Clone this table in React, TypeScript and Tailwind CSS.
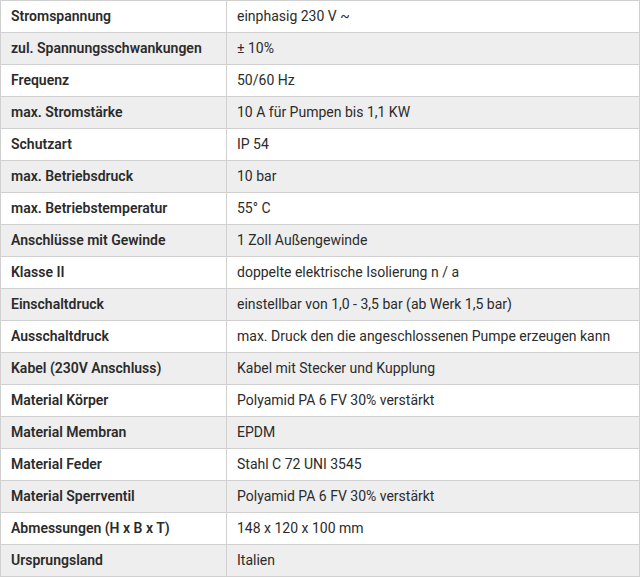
const rows: [string, string][] = [
  ['Stromspannung', 'einphasig 230 V ~'],
  ['zul. Spannungsschwankungen', '± 10%'],
  ['Frequenz', '50/60 Hz'],
  ['max. Stromstärke', '10 A für Pumpen bis 1,1 KW'],
  ['Schutzart', 'IP 54'],
  ['max. Betriebsdruck', '10 bar'],
  ['max. Betriebstemperatur', '55° C'],
  ['Anschlüsse mit Gewinde', '1 Zoll Außengewinde'],
  ['Klasse II', 'doppelte elektrische Isolierung n / a'],
  ['Einschaltdruck', 'einstellbar von 1,0 - 3,5 bar (ab Werk 1,5 bar)'],
  ['Ausschaltdruck', 'max. Druck den die angeschlossenen Pumpe erzeugen kann'],
  ['Kabel (230V Anschluss)', 'Kabel mit Stecker und Kupplung'],
  ['Material Körper', 'Polyamid PA 6 FV 30% verstärkt'],
  ['Material Membran', 'EPDM'],
  ['Material Feder', 'Stahl C 72 UNI 3545'],
  ['Material Sperrventil', 'Polyamid PA 6 FV 30% verstärkt'],
  ['Abmessungen (H x B x T)', '148 x 120 x 100 mm'],
  ['Ursprungsland', 'Italien'],
];

export default function App() {
  return (
    <div className="w-[640px] bg-white font-['Roboto',sans-serif] text-[14px] text-[#2b2b2b]">
      <table className="w-full border-collapse">
        <tbody>
          {rows.map(([k, v], i) => (
            <tr key={k} className={i % 2 === 1 ? 'bg-[#eeeeee]' : 'bg-white'}>
              <td className="h-[32px] w-[226px] border border-[#d0d0d0] px-[10px] py-0 font-semibold">{k}</td>
              <td className="h-[32px] border border-[#d0d0d0] px-[10px] py-0">{v}</td>
            </tr>
          ))}
        </tbody>
      </table>
    </div>
  );
}
